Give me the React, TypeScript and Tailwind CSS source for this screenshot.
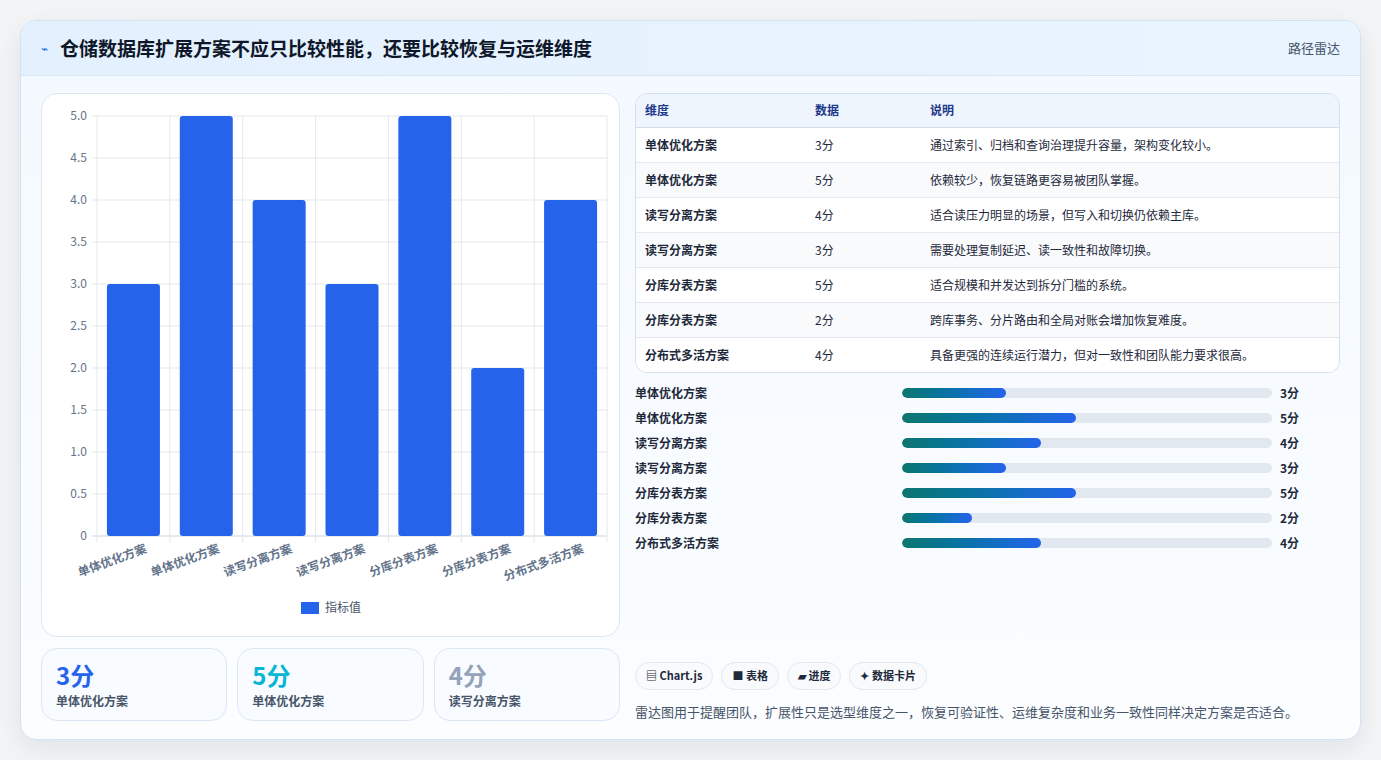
import React from "react"

const rows = [
  { name: "单体优化方案", v: 3, note: "通过索引、归档和查询治理提升容量，架构变化较小。" },
  { name: "单体优化方案", v: 5, note: "依赖较少，恢复链路更容易被团队掌握。" },
  { name: "读写分离方案", v: 4, note: "适合读压力明显的场景，但写入和切换仍依赖主库。" },
  { name: "读写分离方案", v: 3, note: "需要处理复制延迟、读一致性和故障切换。" },
  { name: "分库分表方案", v: 5, note: "适合规模和并发达到拆分门槛的系统。" },
  { name: "分库分表方案", v: 2, note: "跨库事务、分片路由和全局对账会增加恢复难度。" },
  { name: "分布式多活方案", v: 4, note: "具备更强的连续运行潜力，但对一致性和团队能力要求很高。" },
]

const font = { fontFamily: '"Noto Sans CJK SC", "Liberation Sans", sans-serif' }

function Chart() {
  const x0 = 55, x1 = 565, y0 = 22, y1 = 442
  const step = (x1 - x0) / 7
  const ticks = [0, 0.5, 1, 1.5, 2, 2.5, 3, 3.5, 4, 4.5, 5]
  const y = (v: number) => y1 - (v / 5) * (y1 - y0)
  return (
    <svg width="579" height="543" className="block" style={font}>
      {ticks.map((t) => (
        <g key={t}>
          <line x1={x0 - 5} x2={x1} y1={y(t)} y2={y(t)} stroke={t === 0 ? "#cbd5e1" : "#e5e7eb"} />
          <text x={x0 - 10} y={y(t) + 4} textAnchor="end" fontSize="12" fill="#64748b">{t === 0 ? "0" : t.toFixed(1)}</text>
        </g>
      ))}
      {Array.from({ length: 8 }).map((_, i) => (
        <line key={i} x1={x0 + i * step} x2={x0 + i * step} y1={y0} y2={y1 + 6} stroke="#e5e7eb" />
      ))}
      {rows.map((r, i) => {
        const cx = x0 + i * step + step / 2
        return (
          <g key={i}>
            <rect x={cx - 26.5} y={y(r.v)} width="53" height={y1 - y(r.v)} rx="3" fill="#2563eb" />
            <text x={cx + 14} y={y1 + 16} textAnchor="end" fontSize="12" fontWeight="600" fill="#64748b" transform={`rotate(-20 ${cx + 14} ${y1 + 16})`}>{r.name}</text>
          </g>
        )
      })}
      <rect x="259" y="508" width="18" height="12" fill="#2563eb" />
      <text x="283" y="518" fontSize="12" fill="#475569">指标值</text>
    </svg>
  )
}

export default function App() {
  return (
    <div className="min-h-screen bg-[#f3f4f6] p-5 pt-5" style={font}>
      <div className="h-[720px] rounded-2xl border border-[#cfe3f3] bg-gradient-to-b from-[#f3f9ff] to-[#fbfdff] shadow-[0_8px_24px_rgba(15,23,42,0.08)] overflow-hidden flex flex-col">
        <div className="h-[55px] shrink-0 flex items-center justify-between px-5 bg-gradient-to-r from-[#e3f0fd] to-[#eaf4ff] border-b border-[#d6e6f5]">
          <div className="flex items-center gap-3">
            <span className="text-[#2563eb] text-xs">⌁</span>
            <h1 className="text-[19px] font-bold text-[#0f172a]">仓储数据库扩展方案不应只比较性能，还要比较恢复与运维维度</h1>
          </div>
          <span className="text-[13px] text-[#475569]">路径雷达</span>
        </div>
        <div className="flex gap-[15px] px-5 pt-[17px] pb-5 flex-1">
          <div className="w-[579px] flex flex-col gap-[11px]">
            <div className="h-[544px] rounded-2xl border border-[#dbe7f3] bg-white overflow-hidden">
              <Chart />
            </div>
            <div className="grid grid-cols-3 gap-[10px] h-[73px]">
              {[
                { v: "3分", c: "text-[#2563eb]", l: "单体优化方案" },
                { v: "5分", c: "text-[#06b6d4]", l: "单体优化方案" },
                { v: "4分", c: "text-[#94a3b8]", l: "读写分离方案" },
              ].map((s, i) => (
                <div key={i} className="rounded-2xl border border-[#dbe7f3] bg-[#f8fbff] px-[14px] pt-[10px]">
                  <div className={`text-[24px] leading-8 font-bold ${s.c}`}>{s.v}</div>
                  <div className="text-xs font-semibold text-[#475569] mt-0.5">{s.l}</div>
                </div>
              ))}
            </div>
          </div>
          <div className="flex-1 flex flex-col">
            <div className="rounded-xl border border-[#d2dfec] overflow-hidden bg-white">
              <table className="w-full text-xs">
                <thead>
                  <tr className="bg-[#eef5fd] text-[#1e3a8a] h-[33px] border-b border-[#d2dfec]">
                    <th className="text-left font-semibold pl-[9px] w-[179px]">维度</th>
                    <th className="text-left font-semibold w-[115px]">数据</th>
                    <th className="text-left font-semibold">说明</th>
                  </tr>
                </thead>
                <tbody>
                  {rows.map((r, i) => (
                    <tr key={i} className={`h-[35px] text-[#1e293b] ${i < 6 ? "border-b border-[#e2e8f0]" : ""} ${i % 2 ? "bg-[#f8fafc]" : "bg-white"}`}>
                      <td className="pl-[9px] font-semibold">{r.name}</td>
                      <td>{r.v}分</td>
                      <td>{r.note}</td>
                    </tr>
                  ))}
                </tbody>
              </table>
            </div>
            <div className="flex flex-col gap-[7px] mt-[11px]">
              {rows.map((r, i) => (
                <div key={i} className="flex items-center h-[18px] text-xs font-semibold text-[#1e293b]">
                  <div className="w-[267px]">{r.name}</div>
                  <div className="w-[370px] h-[10px] rounded-full bg-[#e2e8f0] overflow-hidden">
                    <div className="h-full rounded-full bg-gradient-to-r from-[#0f766e] to-[#2563eb]" style={{ width: `${r.v * 9.4}%` }} />
                  </div>
                  <div className="ml-2 font-bold">{r.v}分</div>
                </div>
              ))}
            </div>
            <div className="mt-auto">
              <div className="flex gap-[8px]">
                {["▤ Chart.js", "■ 表格", "▰ 进度", "✦ 数据卡片"].map((c) => (
                  <span key={c} className="h-[28px] px-[10px] rounded-full border border-[#e2e8f0] bg-[#f8fafc] text-[11px] font-semibold text-[#1e293b] flex items-center">{c}</span>
                ))}
              </div>
              <p className="mt-[12px] text-[13px] text-[#475569]">雷达图用于提醒团队，扩展性只是选型维度之一，恢复可验证性、运维复杂度和业务一致性同样决定方案是否适合。</p>
            </div>
          </div>
        </div>
      </div>
    </div>
  )
}
